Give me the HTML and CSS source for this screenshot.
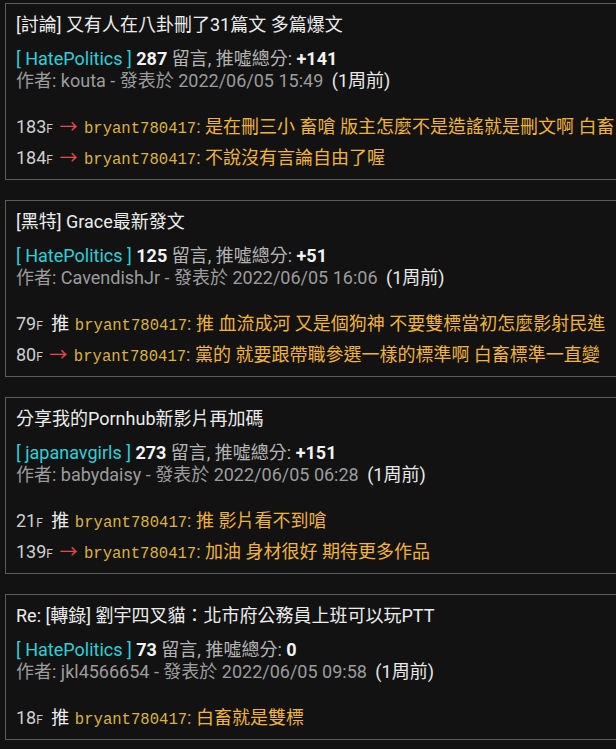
FILE: index.html
```html
<!DOCTYPE html>
<html lang="zh-Hant">
<head>
    <meta charset="UTF-8">
    <meta name="viewport" content="width=device-width, initial-scale=1.0">
    <title>推文紀錄</title>
    <link rel="stylesheet" href="styles.css">
</head>
<body>
    <div class="post-list">
        <!-- 文章 1 -->
        <div class="post-card">
            <div class="post-title">[討論] 又有人在八卦刪了31篇文 多篇爆文</div>
            <div class="post-meta">
                <span class="board">[ HatePolitics ]</span>
                <b>287</b> 留言, 推噓總分: <b>+141</b>
            </div>
            <div class="post-author">
                作者: kouta - 發表於 2022/06/05 15:49 <span class="ago">(1周前)</span>
            </div>
            <div class="comments">
                <div class="comment">
                    <span class="floor">183<small>F</small></span>
                    <span class="tag arrow">→</span>
                    <span class="user">bryant780417</span><span class="colon">:</span>
                    <span class="text">是在刪三小 畜嗆 版主怎麼不是造謠就是刪文啊 白畜 整天在雙標</span>
                </div>
                <div class="comment">
                    <span class="floor">184<small>F</small></span>
                    <span class="tag arrow">→</span>
                    <span class="user">bryant780417</span><span class="colon">:</span>
                    <span class="text">不說沒有言論自由了喔</span>
                </div>
            </div>
        </div>

        <!-- 文章 2 -->
        <div class="post-card">
            <div class="post-title">[黑特] Grace最新發文</div>
            <div class="post-meta">
                <span class="board">[ HatePolitics ]</span>
                <b>125</b> 留言, 推噓總分: <b>+51</b>
            </div>
            <div class="post-author">
                作者: CavendishJr - 發表於 2022/06/05 16:06 <span class="ago">(1周前)</span>
            </div>
            <div class="comments">
                <div class="comment">
                    <span class="floor">79<small>F</small></span>
                    <span class="tag push">推</span>
                    <span class="user">bryant780417</span><span class="colon">:</span>
                    <span class="text">推 血流成河 又是個狗神 不要雙標當初怎麼影射民進</span>
                </div>
                <div class="comment">
                    <span class="floor">80<small>F</small></span>
                    <span class="tag arrow">→</span>
                    <span class="user">bryant780417</span><span class="colon">:</span>
                    <span class="text">黨的 就要跟帶職參選一樣的標準啊 白畜標準一直變</span>
                </div>
            </div>
        </div>

        <!-- 文章 3 -->
        <div class="post-card">
            <div class="post-title">分享我的Pornhub新影片再加碼</div>
            <div class="post-meta">
                <span class="board">[ japanavgirls ]</span>
                <b>273</b> 留言, 推噓總分: <b>+151</b>
            </div>
            <div class="post-author">
                作者: babydaisy - 發表於 2022/06/05 06:28 <span class="ago">(1周前)</span>
            </div>
            <div class="comments">
                <div class="comment">
                    <span class="floor">21<small>F</small></span>
                    <span class="tag push">推</span>
                    <span class="user">bryant780417</span><span class="colon">:</span>
                    <span class="text">推 影片看不到嗆</span>
                </div>
                <div class="comment">
                    <span class="floor">139<small>F</small></span>
                    <span class="tag arrow">→</span>
                    <span class="user">bryant780417</span><span class="colon">:</span>
                    <span class="text">加油 身材很好 期待更多作品</span>
                </div>
            </div>
        </div>

        <!-- 文章 4 -->
        <div class="post-card">
            <div class="post-title">Re: [轉錄] 劉宇四叉貓：北市府公務員上班可以玩PTT</div>
            <div class="post-meta">
                <span class="board">[ HatePolitics ]</span>
                <b>73</b> 留言, 推噓總分: <b>0</b>
            </div>
            <div class="post-author">
                作者: jkl4566654 - 發表於 2022/06/05 09:58 <span class="ago">(1周前)</span>
            </div>
            <div class="comments">
                <div class="comment">
                    <span class="floor">18<small>F</small></span>
                    <span class="tag push">推</span>
                    <span class="user">bryant780417</span><span class="colon">:</span>
                    <span class="text">白畜就是雙標</span>
                </div>
            </div>
        </div>
    </div>
</body>
</html>
```

FILE: styles.css
```css
html {
    overflow: hidden;
    background: #121212;
}
body {
    margin: 0;
    padding: 3px 0 0 5px;
    font-family: Roboto, "Noto Sans CJK TC", sans-serif;
    font-size: 18px;
    color: #e6e6e6;
    background: #121212;
}
.post-list {
    display: flex;
    flex-direction: column;
    gap: 20px;
}
.post-card {
    width: 680px;
    border: 1px solid #5c5c5c;
    padding: 8px 10px 6px 10px;
    white-space: nowrap;
}
.post-title {
    height: 26px;
    line-height: 26px;
    color: #ececec;
}
.post-meta {
    margin-top: 10px;
    height: 22px;
    line-height: 22px;
    color: #b4b4b4;
}
.post-meta b {
    color: #f2f2f2;
    font-weight: bold;
}
.board {
    color: #2cd0d8;
}
.post-author {
    height: 22px;
    line-height: 22px;
    color: #9c9c9c;
}
.post-author .ago {
    margin-left: 4px;
    color: #e8e8e8;
}
.comments {
    margin-top: 19px;
}
.comment {
    height: 31px;
    line-height: 31px;
}
.comment span {
    line-height: 1;
}
.floor {
    color: #cfcfcf;
}
.floor small {
    font-size: 12px;
}
.tag {
    margin: 0 2px 0 2px;
}
.tag.arrow {
    color: #e5484d;
}
.tag.push {
    color: #f0f0f0;
    margin: 0 1px 0 4px;
}
.user {
    font-family: "Courier New", "Liberation Mono", monospace;
    font-size: 15.6px;
    color: #dcb43c;
}
.colon {
    color: #c8a848;
}
.text {
    color: #f0b43a;
}
```
